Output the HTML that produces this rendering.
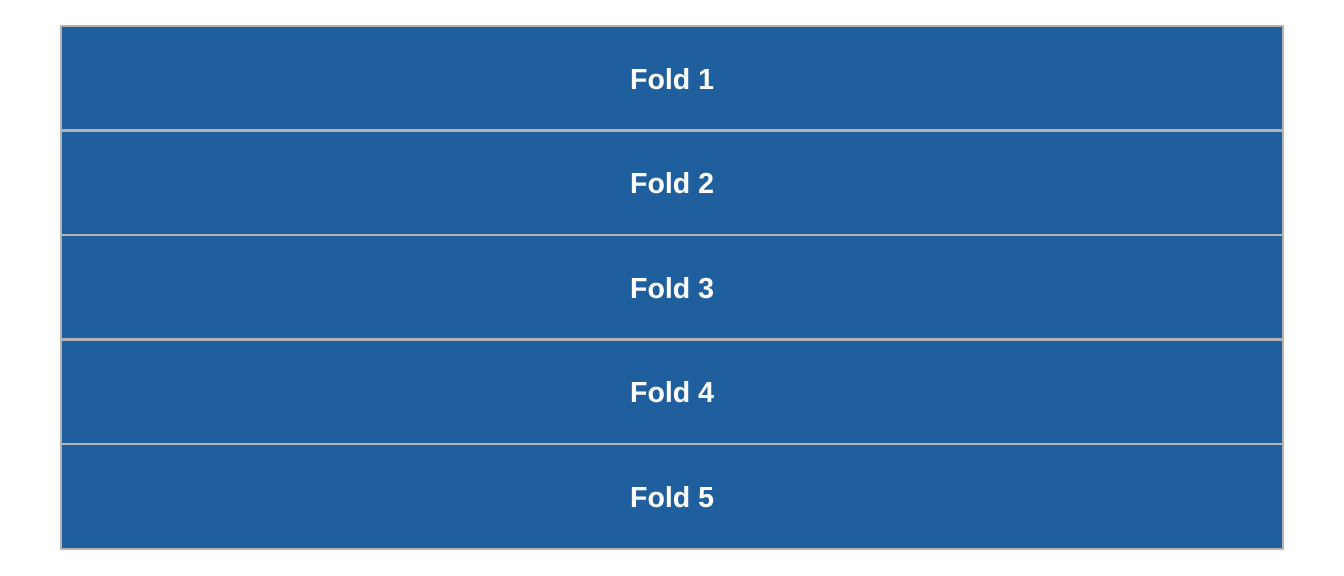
<!DOCTYPE html>
<html><head><style>
body{margin:0;width:1344px;height:576px;background:#fff;position:relative;overflow:hidden;font-family:"Liberation Sans",sans-serif}
.r{position:absolute;left:60px;width:1224px;background:#1f5f9e;border:2px solid #b3b3b3;color:#fff;font-weight:bold;font-size:28.5px;display:flex;align-items:center;justify-content:center;padding-top:4px;box-sizing:border-box}
</style></head><body>
<div class="r" style="top:25px;height:106px">Fold 1</div>
<div class="r" style="top:129.5px;height:106px">Fold 2</div>
<div class="r" style="top:234px;height:106px">Fold 3</div>
<div class="r" style="top:338.5px;height:106px">Fold 4</div>
<div class="r" style="top:443px;height:107px">Fold 5</div>
</body></html>
